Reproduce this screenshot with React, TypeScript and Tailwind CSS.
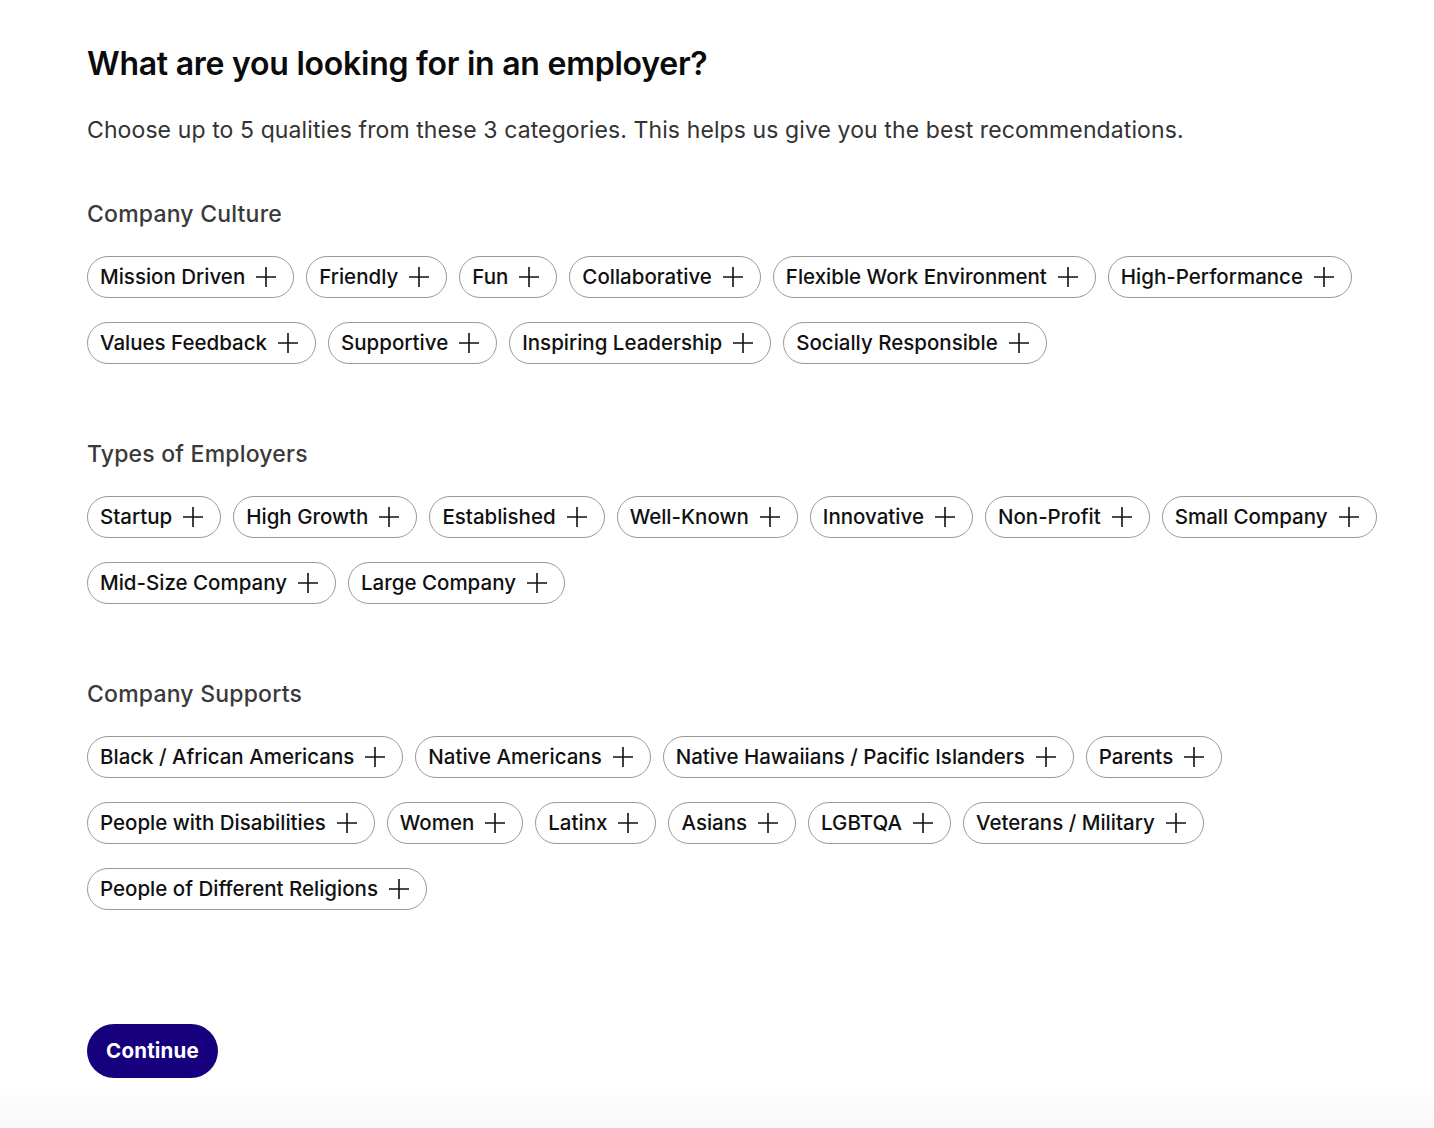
import React from "react";

const sections: { title: string; rows: string[][] }[] = [
  {
    title: "Company Culture",
    rows: [
      ["Mission Driven", "Friendly", "Fun", "Collaborative", "Flexible Work Environment", "High-Performance"],
      ["Values Feedback", "Supportive", "Inspiring Leadership", "Socially Responsible"],
    ],
  },
  {
    title: "Types of Employers",
    rows: [
      ["Startup", "High Growth", "Established", "Well-Known", "Innovative", "Non-Profit", "Small Company"],
      ["Mid-Size Company", "Large Company"],
    ],
  },
  {
    title: "Company Supports",
    rows: [
      ["Black / African Americans", "Native Americans", "Native Hawaiians / Pacific Islanders", "Parents"],
      ["People with Disabilities", "Women", "Latinx", "Asians", "LGBTQA", "Veterans / Military"],
      ["People of Different Religions"],
    ],
  },
];

function PlusIcon() {
  return (
    <svg width="22" height="22" viewBox="0 0 22 22" fill="none" stroke="#111" strokeWidth="1.6">
      <path d="M11 1v20M1 11h20" />
    </svg>
  );
}

function Chip({ label }: { label: string }) {
  return (
    <button className="flex h-[42px] shrink-0 items-center gap-[10px] rounded-full border border-[#9a9a9a] bg-white pl-[12px] pr-[16px] text-[20.5px] font-medium text-[#111]">
      <span>{label}</span>
      <PlusIcon />
    </button>
  );
}

export default function App() {
  return (
    <div className="flex min-h-[1128px] flex-col bg-white font-['Inter',sans-serif]">
      <div className="flex-1 pl-[87px] pt-[44px]">
        <h1 className="text-[32px] font-semibold leading-[40px] tracking-[-0.25px] text-[#0b0b0b]">
          What are you looking for in an employer?
        </h1>
        <p className="mt-[30px] text-[23px] leading-[32px] tracking-[0.1px] text-[#333]">
          Choose up to 5 qualities from these 3 categories. This helps us give you the best recommendations.
        </p>

        {sections.map((section, i) => (
          <section key={section.title} className={i === 0 ? "mt-[52px]" : "mt-[74px]"}>
            <h2 className="text-[23px] font-medium leading-[32px] tracking-[0.2px] text-[#3a3a3a]">{section.title}</h2>
            <div className="mt-[26px] flex flex-col gap-6">
              {section.rows.map((row, r) => (
                <div key={r} className="flex gap-3">
                  {row.map((label) => (
                    <Chip key={label} label={label} />
                  ))}
                </div>
              ))}
            </div>
          </section>
        ))}

        <button className="mt-[114px] h-[54px] w-[131px] rounded-full bg-[#16007d] text-[20.5px] font-bold tracking-[0.2px] text-white">
          Continue
        </button>
      </div>
      <div className="mt-[12px] h-[38px] bg-gradient-to-b from-white to-[#f7f7f7]" />
    </div>
  );
}
